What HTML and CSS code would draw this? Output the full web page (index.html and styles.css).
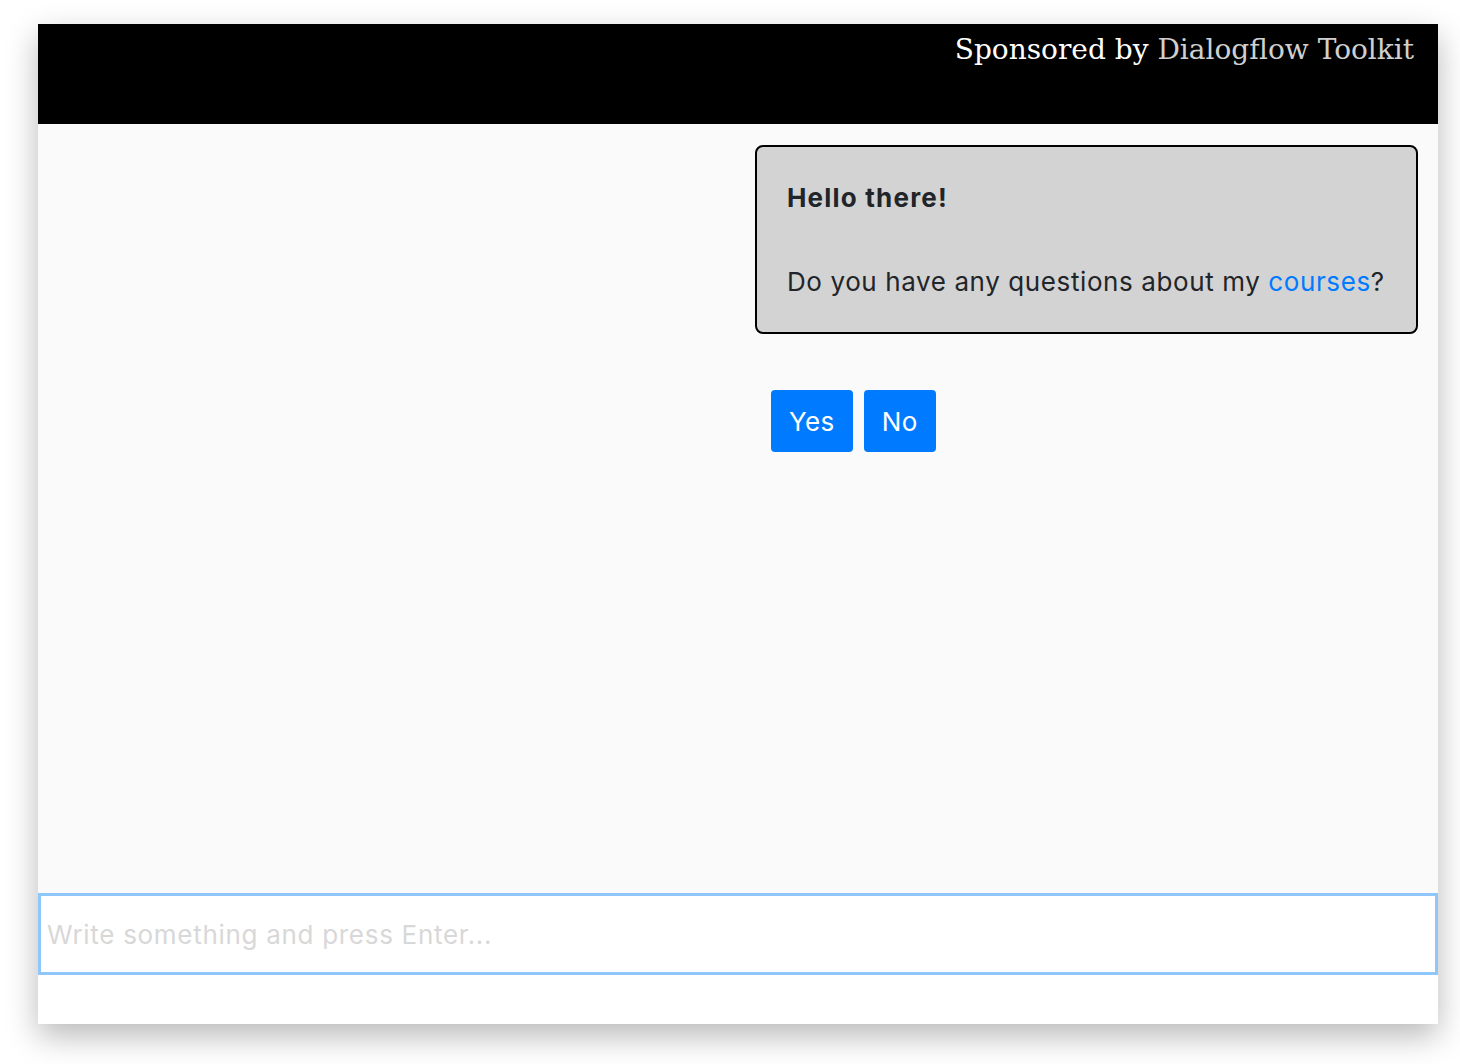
FILE: index.html
```html
<!DOCTYPE html>
<html lang="en">
<head>
    <meta charset="UTF-8">
    <meta name="viewport" content="width=device-width, initial-scale=1.0">
    <title>Chatbot</title>
    <link rel="stylesheet" href="styles.css">
</head>
<body>
    <div class="window">
        <header class="topbar">
            <span class="sponsor">Sponsored by <a href="#">Dialogflow Toolkit</a></span>
        </header>

        <main class="chat">
            <div class="thread">
                <div class="bubble">
                    <p class="greeting">Hello there!</p>
                    <p class="question">Do you have any questions about my <a href="#">courses</a>?</p>
                </div>
                <div class="replies">
                    <button class="reply-btn">Yes</button>
                    <button class="reply-btn">No</button>
                </div>
            </div>
        </main>

        <input class="chat-input" type="text" placeholder="Write something and press Enter...">
        <div class="footer"></div>
    </div>
</body>
</html>
```

FILE: styles.css
```css
* {
    margin: 0;
    padding: 0;
    box-sizing: border-box;
}

body {
    background: #ffffff;
    padding: 24px 22px 40px 38px;
    font-family: Inter, 'Noto Sans', sans-serif;
}

.window {
    width: 1400px;
    height: 1000px;
    display: flex;
    flex-direction: column;
    background: #fafafa;
    box-shadow: 0 12px 30px rgba(0, 0, 0, 0.28);
}

.topbar {
    height: 100px;
    flex-shrink: 0;
    background: #000;
    text-align: right;
    padding: 9px 24px 0;
}

.sponsor {
    font-family: 'DejaVu Serif', Georgia, serif;
    font-size: 28px;
    color: #fff;
}

.sponsor a {
    color: #d0d0d0;
    text-decoration: none;
}

.chat {
    flex: 1;
    padding: 21px 20px;
}

.thread {
    width: 663px;
    margin-left: auto;
}

.bubble {
    background: #d3d3d3;
    border: 2px solid #000;
    border-radius: 8px;
    padding: 31px 30px 31px;
    color: #212529;
    font-size: 26px;
    line-height: 39px;
    letter-spacing: 0.6px;
}

.greeting {
    font-weight: 700;
    letter-spacing: 1.2px;
}

.question {
    margin-top: 45px;
}

.question a {
    color: #007bff;
    text-decoration: none;
}

.replies {
    display: flex;
    gap: 11px;
    padding-left: 16px;
    margin-top: 56px;
}

.reply-btn {
    background: #007bff;
    color: #fff;
    border: none;
    border-radius: 4px;
    font-family: Inter, 'Noto Sans', sans-serif;
    font-size: 26px;
    letter-spacing: 0.4px;
    height: 62px;
    padding: 0 18px;
    cursor: pointer;
}

.chat-input {
    height: 82px;
    flex-shrink: 0;
    width: 100%;
    border: 3px solid #8fc7fb;
    background: #fff;
    padding: 0 6px;
    font-family: Inter, 'Noto Sans', sans-serif;
    font-size: 26px;
    letter-spacing: 0.7px;
    color: #212529;
    outline: none;
}

.chat-input::placeholder {
    color: #d8d8d8;
}

.footer {
    height: 49px;
    flex-shrink: 0;
    background: #fff;
}
```
